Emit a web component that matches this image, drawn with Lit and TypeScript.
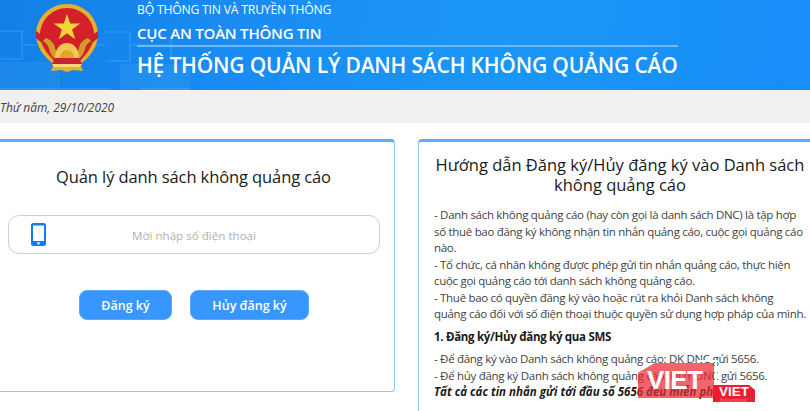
import { LitElement, html, css } from 'lit';
import { customElement } from 'lit/decorators.js';

@customElement('app-root')
export class AppRoot extends LitElement {
  static styles = css`
    :host {
      display: block;
      width: 810px;
      height: 411px;
      overflow: hidden;
      position: relative;
      background: #fff;
      font-family: 'Open Sans', 'Noto Sans', sans-serif;
      color: #333;
    }

    .header {
      position: relative;
      height: 90px;
      display: flex;
      overflow: hidden;
      background: linear-gradient(100deg, #117fe6 0%, #1a8cf3 30%, #1a96f6 62%, #178ef8 100%);
    }

    .header__grid {
      position: absolute;
      inset: 0;
      width: 810px;
      height: 90px;
    }

    .header__emblem {
      position: relative;
      flex: none;
      width: 90px;
      height: 80px;
      margin-left: 25px;
    }

    .header__text {
      position: relative;
      margin-left: 22px;
      width: 541px;
      color: #fff;
    }

    .header__ministry {
      font-size: 12.2px;
      line-height: 17px;
      padding-top: 1px;
      letter-spacing: -0.2px;
      white-space: nowrap;
    }

    .header__dept {
      font-size: 15.1px;
      font-weight: 600;
      line-height: 20px;
      padding-top: 5px;
      padding-bottom: 2px;
      border-bottom: 2px solid #6cb9fb;
      letter-spacing: -0.25px;
      white-space: nowrap;
    }

    .header__title {
      font-size: 21px;
      font-weight: 600;
      line-height: 28px;
      padding-top: 4px;
      white-space: nowrap;
      letter-spacing: -0.18px;
    }

    .date {
      height: 33px;
      background: #f0f0f0;
      font-size: 11.9px;
      font-style: italic;
      line-height: 35px;
      color: #444;
    }

    .main {
      display: grid;
      grid-template-columns: 395px 1fr;
      column-gap: 23px;
      padding-top: 16px;
    }

    .card {
      border: 1px solid #90c9f9;
      border-top: 3px solid #5cadfc;
      background: #fff;
    }

    .manage {
      height: 249px;
      border-left: none;
      border-radius: 0 4px 4px 0;
      box-sizing: content-box;
    }

    .manage__title {
      margin: 0;
      padding: 24px 7px 0 0;
      text-align: center;
      font-size: 16.5px;
      font-weight: 400;
      line-height: 22px;
      color: #1a1a1a;
      letter-spacing: -0.1px;
    }

    .phone-field {
      display: flex;
      align-items: center;
      height: 37px;
      margin: 27px 14px 0 8px;
      border: 1px solid #cfcfcf;
      border-radius: 11px;
    }

    .phone-field__icon {
      flex: none;
      width: 15px;
      height: 23px;
      margin: -1px 0 0 22px;
    }

    .phone-field__hint {
      margin-left: 86px;
      padding-top: 1px;
      font-size: 11.6px;
      color: #b0b0b0;
      white-space: nowrap;
    }

    .actions {
      display: flex;
      justify-content: center;
      gap: 18px;
      margin-top: 36px;
      padding-right: 6px;
    }

    .actions__btn {
      height: 30px;
      border: 1px solid #5aa8fd;
      border-radius: 8px;
      background: #3797ff;
      color: #fff;
      font-family: inherit;
      font-size: 12.5px;
      font-weight: 600;
      padding: 0;
    }

    .actions__btn--add {
      width: 93px;
    }

    .actions__btn--remove {
      width: 119px;
    }

    .guide {
      border-right: none;
      border-radius: 4px 0 0 0;
      padding: 13px 4px 0 15px;
      height: 300px;
    }

    .guide__title {
      margin: 0;
      text-align: center;
      font-size: 16.5px;
      font-weight: 400;
      line-height: 20px;
      color: #1a1a1a;
      padding-bottom: 12px;
    }

    .guide p {
      margin: 0;
      font-size: 11.5px;
      line-height: 16.5px;
      color: #3f3f3f;
      letter-spacing: -0.3px;
    }

    .guide .guide__sub {
      margin: 6px 0;
      font-weight: 700;
      color: #1a1a1a;
    }

    .guide .guide__note {
      font-weight: 700;
      font-style: italic;
      color: #1a1a1a;
      letter-spacing: 0;
    }

    .mark {
      position: absolute;
      left: 638px;
      top: 360px;
      width: 120px;
      height: 44px;
    }

    .mark__big {
      position: absolute;
      left: 0;
      top: 3px;
      width: 76px;
      height: 35px;
      padding-left: 9px;
      box-sizing: border-box;
      background: rgba(236, 40, 50, 0.72);
      clip-path: polygon(0 28%, 22% 0, 100% 0, 100% 100%, 0 100%);
      color: #fff;
      font-family: 'Liberation Sans', sans-serif;
      font-weight: 700;
      font-size: 26px;
      line-height: 35px;
      letter-spacing: -0.6px;
    }

    .mark__edge {
      position: absolute;
      left: 60px;
      top: 0;
      width: 17px;
      height: 24px;
      border-top: 2px solid #fff;
      border-right: 2px solid #fff;
    }

    .mark__small {
      position: absolute;
      left: 75px;
      top: 25px;
      width: 42px;
      height: 17px;
      background: #ee1c30;
      clip-path: polygon(0 0, 86% 0, 100% 30%, 100% 100%, 0 100%);
      color: #fff;
      font-family: 'Liberation Sans', sans-serif;
      font-weight: 700;
      font-size: 13.5px;
      line-height: 13px;
      text-align: center;
    }

    .mark__tag {
      display: block;
      font-family: 'Liberation Serif', serif;
      font-weight: 400;
      font-style: italic;
      font-size: 6px;
      line-height: 4px;
      color: rgba(255, 255, 255, 0.45);
    }
  `;

  render() {
    return html`
      <div class="header">
        <svg class="header__grid" viewBox="0 0 810 90" fill="none" aria-hidden="true">
          <g stroke="#4fb0f8" stroke-opacity="0.55" stroke-width="1.2">
            <path d="M0 31h22v28H0M22 45h15M97 45h9M106 32h24v29h-24M130 45h40M171 36v22M0 89h110M140 89h50" />
          </g>
          <g fill="#56b4fa" fill-opacity="0.16">
            <rect x="0" y="62" width="60" height="28" />
            <rect x="120" y="64" width="70" height="26" />
          </g>
        </svg>
        <svg class="header__emblem" viewBox="0 0 90 80" aria-hidden="true">
          <path d="M42 4C25 4 12 17 11 33c0 13 7 24 18 31l-3 7 10-1 6 2 6-2 10 1-3-7c11-7 18-18 18-31C72 17 59 4 42 4z" fill="#e6b02e" />
          <path d="M42 8C28 8 16 19 15 33c0 8 3 15 8 21l6 7h26l6-7c5-6 8-13 8-21C68 19 56 8 42 8z" fill="#d3202a" />
          <polygon points="42,14 45.200,23.600 55.300,23.600 47.100,29.500 50.200,39.200 42,33.200 33.800,39.200 36.900,29.500 28.700,23.600 38.800,23.600" fill="#f5d63a" />
          <path d="M11 31l13 9 6 1-1 5-11-2-7-6zM73 31L60 40l-6 1 1 5 11-2 7-6z" fill="#c9242b" />
          <path d="M21 38c5 2 8 5 9 10 1 4 3 8 6 10l-3 3c-5-3-8-7-9-12-1-4-3-6-6-8zM63 38c-5 2-8 5-9 10-1 4-3 8-6 10l3 3c5-3 8-7 9-12 1-4 3-6 6-8z" fill="#d59a2a" />
          <path d="M30 58c0-9 5-15 12-15s12 6 12 15z" fill="#f2c84f" />
          <path d="M35 58c0-5 3-8 7-8s7 3 7 8z" fill="#e3a52c" />
          <path d="M30 58h24l3 6H27z" fill="#c5252a" />
          <path d="M27 64h30l-2 3H29z" fill="#f5d777" />
        </svg>
        <div class="header__text">
          <div class="header__ministry">BỘ THÔNG TIN VÀ TRUYỀN THÔNG</div>
          <div class="header__dept">CỤC AN TOÀN THÔNG TIN</div>
          <div class="header__title">HỆ THỐNG QUẢN LÝ DANH SÁCH KHÔNG QUẢNG CÁO</div>
        </div>
      </div>
      <div class="date">Thứ năm, 29/10/2020</div>
      <div class="main">
        <section class="card manage">
          <h2 class="manage__title">Quản lý danh sách không quảng cáo</h2>
          <div class="phone-field">
            <svg class="phone-field__icon" viewBox="0 0 15 23" aria-hidden="true">
              <path fill="#0a7dfb" fill-rule="evenodd" d="M2.5 0h10A2.5 2.5 0 0 1 15 2.5v18a2.5 2.5 0 0 1-2.5 2.5h-10A2.5 2.5 0 0 1 0 20.500v-18A2.500 2.500 0 0 1 2.500 0zM2 2.500V18h11V2.500zM7.500 19a1.300 1.300 0 1 0 0 2.600 1.300 1.300 0 0 0 0-2.600z" />
            </svg>
            <span class="phone-field__hint">Mời nhập số điện thoại</span>
          </div>
          <div class="actions">
            <button class="actions__btn actions__btn--add">Đăng ký</button>
            <button class="actions__btn actions__btn--remove">Hủy đăng ký</button>
          </div>
        </section>
        <section class="card guide">
          <h2 class="guide__title">Hướng dẫn Đăng ký/Hủy đăng ký vào Danh sách không quảng cáo</h2>
          <p>- Danh sách không quảng cáo (hay còn gọi là danh sách DNC) là tập hợp số thuê bao đăng ký không nhận tin nhắn quảng cáo, cuộc gọi quảng cáo nào.</p>
          <p>- Tổ chức, cá nhân không được phép gửi tin nhắn quảng cáo, thực hiện cuộc gọi quảng cáo tới danh sách không quảng cáo.</p>
          <p>- Thuê bao có quyền đăng ký vào hoặc rút ra khỏi Danh sách không quảng cáo đối với số điện thoại thuộc quyền sử dụng hợp pháp của mình.</p>
          <p class="guide__sub">1. Đăng ký/Hủy đăng ký qua SMS</p>
          <p>- Để đăng ký vào Danh sách không quảng cáo: DK DNC gửi 5656.</p>
          <p>- Để hủy đăng ký Danh sách không quảng cáo: HUY DNC gửi 5656.</p>
          <p class="guide__note">Tất cả các tin nhắn gửi tới đầu số 5656 đều miễn phí.</p>
        </section>
      </div>
      <div class="mark">
        <div class="mark__big">VIET</div>
        <div class="mark__edge"></div>
        <div class="mark__small">VIET<span class="mark__tag">Infographic</span></div>
      </div>
    `;
  }
}
